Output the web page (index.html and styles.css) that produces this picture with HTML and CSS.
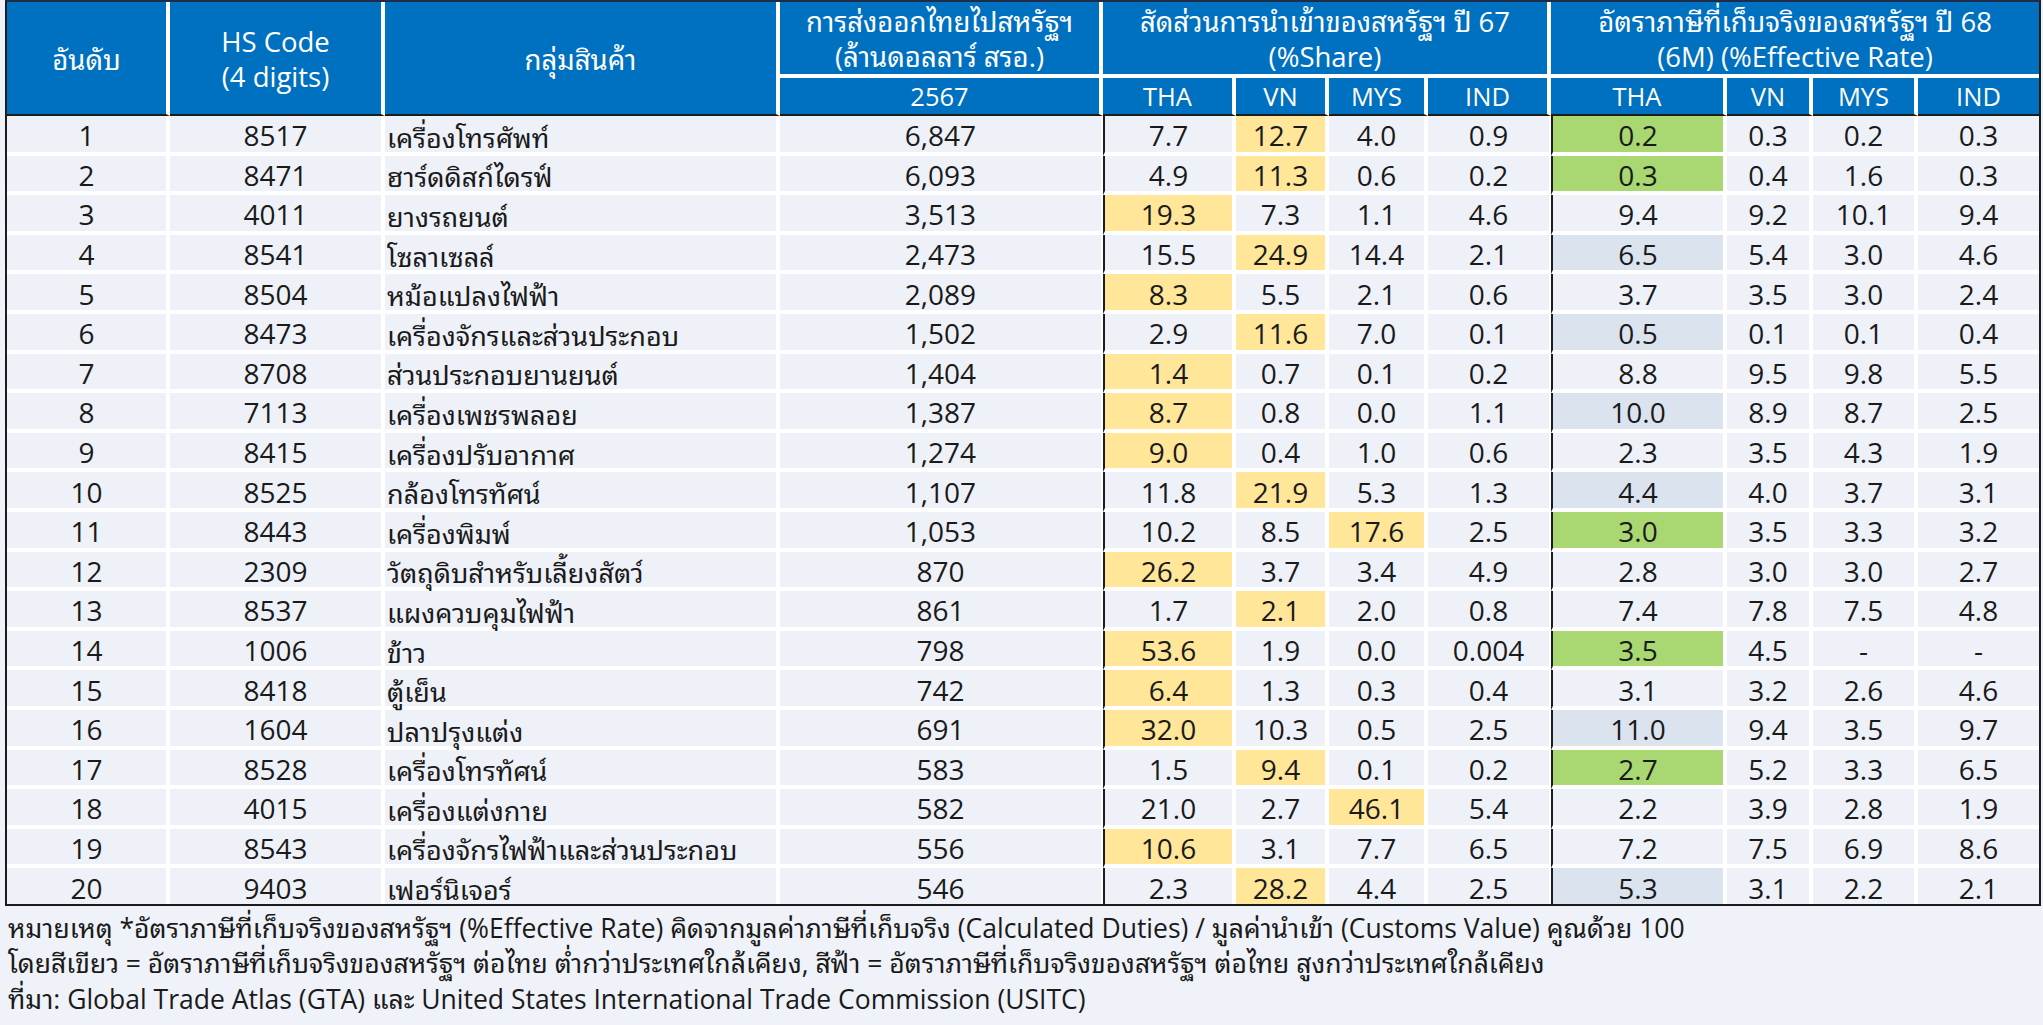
FILE: index.html
```html
<!DOCTYPE html>
<html lang="th">
<head>
<meta charset="utf-8">
<title>Top 20</title>
<link rel="stylesheet" href="styles.css">
</head>
<body>
<div class="page">
<table class="tbl">
<colgroup>
<col class="w-rank"><col class="w-hs"><col class="w-name"><col class="w-exp">
<col class="w-s1"><col class="w-s2"><col class="w-s3"><col class="w-s4">
<col class="w-r1"><col class="w-r2"><col class="w-r3"><col class="w-r4">
</colgroup>
<thead>
<tr class="h1">
<th rowspan="2" class="span">อันดับ</th>
<th rowspan="2" class="span">HS Code<br>(4 digits)</th>
<th rowspan="2" class="span">กลุ่มสินค้า</th>
<th>การส่งออกไทยไปสหรัฐฯ<br>(ล้านดอลลาร์ สรอ.)</th>
<th colspan="4">สัดส่วนการนำเข้าของสหรัฐฯ ปี 67<br>(%Share)</th>
<th colspan="4" class="last">อัตราภาษีที่เก็บจริงของสหรัฐฯ ปี 68<br>(6M) (%Effective Rate)</th>
</tr>
<tr class="h2">
<th>2567</th>
<th>THA</th><th>VN</th><th>MYS</th><th>IND</th>
<th>THA</th><th>VN</th><th>MYS</th><th class="last">IND</th>
</tr>
</thead>
<tbody>
<tr><td>1</td><td>8517</td><td class="name">เครื่องโทรศัพท์</td><td class="exp">6,847</td><td class="gs">7.7</td><td class="y">12.7</td><td>4.0</td><td class="ge">0.9</td><td class="gs g">0.2</td><td>0.3</td><td>0.2</td><td class="last">0.3</td></tr>
<tr><td>2</td><td>8471</td><td class="name">ฮาร์ดดิสก์ไดรฟ์</td><td class="exp">6,093</td><td class="gs">4.9</td><td class="y">11.3</td><td>0.6</td><td class="ge">0.2</td><td class="gs g">0.3</td><td>0.4</td><td>1.6</td><td class="last">0.3</td></tr>
<tr><td>3</td><td>4011</td><td class="name">ยางรถยนต์</td><td class="exp">3,513</td><td class="gs y">19.3</td><td>7.3</td><td>1.1</td><td class="ge">4.6</td><td class="gs">9.4</td><td>9.2</td><td>10.1</td><td class="last">9.4</td></tr>
<tr><td>4</td><td>8541</td><td class="name">โซลาเซลล์</td><td class="exp">2,473</td><td class="gs">15.5</td><td class="y">24.9</td><td>14.4</td><td class="ge">2.1</td><td class="gs b">6.5</td><td>5.4</td><td>3.0</td><td class="last">4.6</td></tr>
<tr><td>5</td><td>8504</td><td class="name">หม้อแปลงไฟฟ้า</td><td class="exp">2,089</td><td class="gs y">8.3</td><td>5.5</td><td>2.1</td><td class="ge">0.6</td><td class="gs">3.7</td><td>3.5</td><td>3.0</td><td class="last">2.4</td></tr>
<tr><td>6</td><td>8473</td><td class="name">เครื่องจักรและส่วนประกอบ</td><td class="exp">1,502</td><td class="gs">2.9</td><td class="y">11.6</td><td>7.0</td><td class="ge">0.1</td><td class="gs b">0.5</td><td>0.1</td><td>0.1</td><td class="last">0.4</td></tr>
<tr><td>7</td><td>8708</td><td class="name">ส่วนประกอบยานยนต์</td><td class="exp">1,404</td><td class="gs y">1.4</td><td>0.7</td><td>0.1</td><td class="ge">0.2</td><td class="gs">8.8</td><td>9.5</td><td>9.8</td><td class="last">5.5</td></tr>
<tr><td>8</td><td>7113</td><td class="name">เครื่องเพชรพลอย</td><td class="exp">1,387</td><td class="gs y">8.7</td><td>0.8</td><td>0.0</td><td class="ge">1.1</td><td class="gs b">10.0</td><td>8.9</td><td>8.7</td><td class="last">2.5</td></tr>
<tr><td>9</td><td>8415</td><td class="name">เครื่องปรับอากาศ</td><td class="exp">1,274</td><td class="gs y">9.0</td><td>0.4</td><td>1.0</td><td class="ge">0.6</td><td class="gs">2.3</td><td>3.5</td><td>4.3</td><td class="last">1.9</td></tr>
<tr><td>10</td><td>8525</td><td class="name">กล้องโทรทัศน์</td><td class="exp">1,107</td><td class="gs">11.8</td><td class="y">21.9</td><td>5.3</td><td class="ge">1.3</td><td class="gs b">4.4</td><td>4.0</td><td>3.7</td><td class="last">3.1</td></tr>
<tr><td>11</td><td>8443</td><td class="name">เครื่องพิมพ์</td><td class="exp">1,053</td><td class="gs">10.2</td><td>8.5</td><td class="y">17.6</td><td class="ge">2.5</td><td class="gs g">3.0</td><td>3.5</td><td>3.3</td><td class="last">3.2</td></tr>
<tr><td>12</td><td>2309</td><td class="name">วัตถุดิบสำหรับเลี้ยงสัตว์</td><td class="exp">870</td><td class="gs y">26.2</td><td>3.7</td><td>3.4</td><td class="ge">4.9</td><td class="gs">2.8</td><td>3.0</td><td>3.0</td><td class="last">2.7</td></tr>
<tr><td>13</td><td>8537</td><td class="name">แผงควบคุมไฟฟ้า</td><td class="exp">861</td><td class="gs">1.7</td><td class="y">2.1</td><td>2.0</td><td class="ge">0.8</td><td class="gs">7.4</td><td>7.8</td><td>7.5</td><td class="last">4.8</td></tr>
<tr><td>14</td><td>1006</td><td class="name">ข้าว</td><td class="exp">798</td><td class="gs y">53.6</td><td>1.9</td><td>0.0</td><td class="ge">0.004</td><td class="gs g">3.5</td><td>4.5</td><td>-</td><td class="last">-</td></tr>
<tr><td>15</td><td>8418</td><td class="name">ตู้เย็น</td><td class="exp">742</td><td class="gs y">6.4</td><td>1.3</td><td>0.3</td><td class="ge">0.4</td><td class="gs">3.1</td><td>3.2</td><td>2.6</td><td class="last">4.6</td></tr>
<tr><td>16</td><td>1604</td><td class="name">ปลาปรุงแต่ง</td><td class="exp">691</td><td class="gs y">32.0</td><td>10.3</td><td>0.5</td><td class="ge">2.5</td><td class="gs b">11.0</td><td>9.4</td><td>3.5</td><td class="last">9.7</td></tr>
<tr><td>17</td><td>8528</td><td class="name">เครื่องโทรทัศน์</td><td class="exp">583</td><td class="gs">1.5</td><td class="y">9.4</td><td>0.1</td><td class="ge">0.2</td><td class="gs g">2.7</td><td>5.2</td><td>3.3</td><td class="last">6.5</td></tr>
<tr><td>18</td><td>4015</td><td class="name">เครื่องแต่งกาย</td><td class="exp">582</td><td class="gs">21.0</td><td>2.7</td><td class="y">46.1</td><td class="ge">5.4</td><td class="gs">2.2</td><td>3.9</td><td>2.8</td><td class="last">1.9</td></tr>
<tr><td>19</td><td>8543</td><td class="name">เครื่องจักรไฟฟ้าและส่วนประกอบ</td><td class="exp">556</td><td class="gs y">10.6</td><td>3.1</td><td>7.7</td><td class="ge">6.5</td><td class="gs">7.2</td><td>7.5</td><td>6.9</td><td class="last">8.6</td></tr>
<tr class="lastrow"><td>20</td><td>9403</td><td class="name">เฟอร์นิเจอร์</td><td class="exp">546</td><td class="gs">2.3</td><td class="y">28.2</td><td>4.4</td><td class="ge">2.5</td><td class="gs b">5.3</td><td>3.1</td><td>2.2</td><td class="last">2.1</td></tr>
</tbody>
</table>
<div class="notes">
<p>หมายเหตุ *อัตราภาษีที่เก็บจริงของสหรัฐฯ (%Effective Rate) คิดจากมูลค่าภาษีที่เก็บจริง (Calculated Duties) / มูลค่านำเข้า (Customs Value) คูณด้วย 100</p>
<p>โดยสีเขียว = อัตราภาษีที่เก็บจริงของสหรัฐฯ ต่อไทย ต่ำกว่าประเทศใกล้เคียง, สีฟ้า = อัตราภาษีที่เก็บจริงของสหรัฐฯ ต่อไทย สูงกว่าประเทศใกล้เคียง</p>
<p>ที่มา: Global Trade Atlas (GTA) และ United States International Trade Commission (USITC)</p>
</div>
</div>
</body>
</html>
```
FILE: styles.css
```css
html, body {
  margin: 0;
  padding: 0;
  background: #eff2f8;
}

.page {
  padding: 0 2px 0 5px;
}

.tbl {
  table-layout: fixed;
  width: 2036px;
  border-collapse: separate;
  border-spacing: 0;
  border: 2px solid #1c1c1c;
  border-top-color: #1d2c48;
  font-family: "Open Sans", "Noto Sans Thai Looped", "Noto Sans Thai", sans-serif;
}

.w-rank { width: 163px; }
.w-hs { width: 215px; }
.w-name { width: 395px; }
.w-exp { width: 323px; }
.w-s1 { width: 133px; }
.w-s2 { width: 93px; }
.w-s3 { width: 99px; }
.w-s4 { width: 123px; }
.w-r1 { width: 176px; }
.w-r2 { width: 86px; }
.w-r3 { width: 105px; }
.w-r4 { width: 121px; }

.tbl th {
  background: #0070c0;
  color: #ffffff;
  font-weight: normal;
  font-size: 27.5px;
  line-height: 35px;
  padding: 0;
  text-align: center;
  vertical-align: middle;
  border-right: 4px solid #ffffff;
  border-bottom: 4px solid #ffffff;
}

.tbl tr.h1 {
  height: 75px;
}

.tbl tr.h1 th {
  padding-top: 2px;
}

.tbl tr.h2 {
  height: 38px;
}

.tbl tr.h2 th {
  font-size: 25.5px;
}

.tbl tr.h2 th,
.tbl th.span {
  border-bottom: 2px solid #1c1c1c;
}

.tbl th.last,
.tbl td.last {
  border-right: none;
}

.tbl tbody tr {
  height: 39.6px;
}

.tbl tbody tr.lastrow {
  height: 35.6px;
}

.tbl td {
  background: #eef1f8;
  color: #1a1a1a;
  font-size: 28px;
  font-stretch: 94%;
  line-height: 1;
  padding: 3px 0 0;
  text-align: center;
  vertical-align: middle;
  white-space: nowrap;
  border-right: 4px solid #ffffff;
  border-bottom: 4px solid #ffffff;
}

.tbl tr.lastrow td {
  border-bottom: none;
}

.tbl td.name {
  text-align: left;
  padding-left: 2px;
  font-size: 27px;
  font-family: "Noto Sans Thai Looped", "Noto Sans Thai", sans-serif;
}

.tbl td.exp,
.tbl td.ge {
  border-right-width: 2px;
}

.tbl td.gs {
  border-left: 2px solid #1c1c1c;
}

.tbl td.y { background: #ffe699; }
.tbl td.g { background: #a9d771; }
.tbl td.b { background: #dbe3ef; }

.notes {
  padding: 5px 0 0 3px;
  font-family: "Open Sans", "Noto Sans Thai Looped", "Noto Sans Thai", sans-serif;
  font-size: 26.5px;
  color: #1a1a1a;
}

.notes p {
  margin: 0;
  line-height: 35.5px;
  white-space: nowrap;
}
```
